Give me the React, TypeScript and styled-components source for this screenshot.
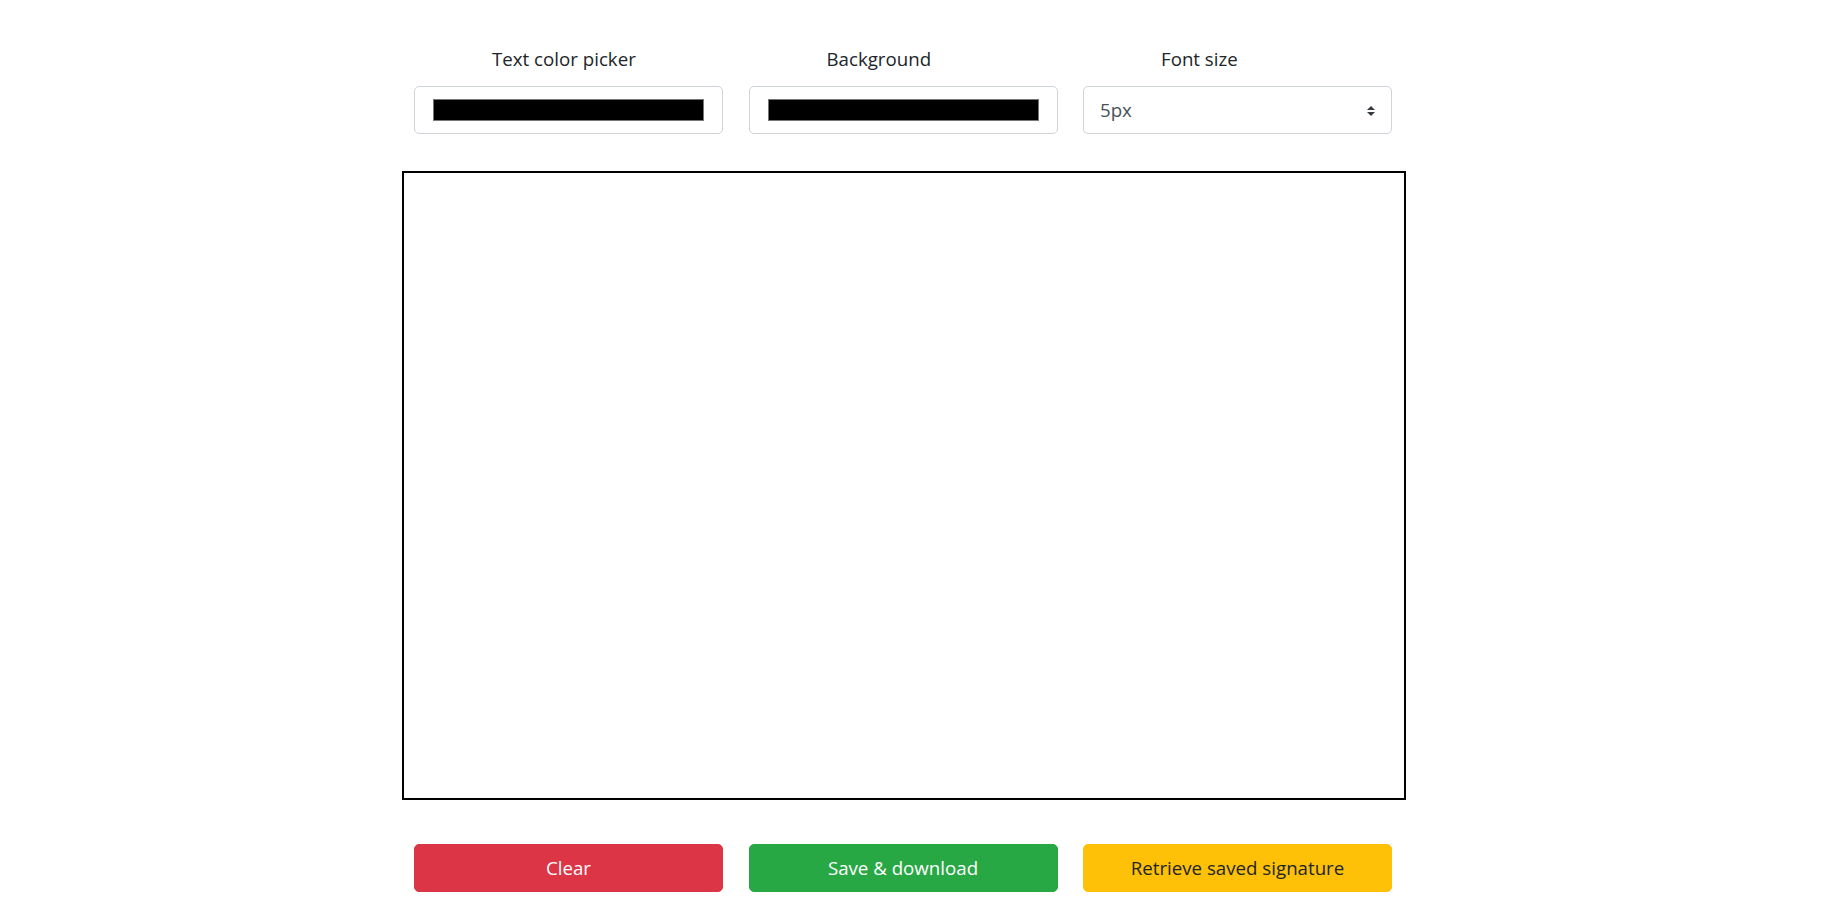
import React, { useState } from "react";
import styled, { createGlobalStyle } from "styled-components";

const FONT = `"Open Sans", "Noto Sans", "Liberation Sans", sans-serif`;
const FS = "18.7px";

const GlobalStyle = createGlobalStyle`
  html, body { margin: 0; padding: 0; background: #ffffff; }
  body { font-family: ${FONT}; color: #212529; }
  * { box-sizing: border-box; }
`;

const Page = styled.div`
  display: flex;
  justify-content: center;
  padding: 44px 40px 32px 0;
`;

const Main = styled.main`
  width: 1004px;
  display: flex;
  flex-direction: column;
`;

const Row = styled.div`
  display: grid;
  grid-template-columns: repeat(3, 309px);
  column-gap: 25.5px;
  padding-left: 12px;
`;

const Field = styled.div`
  display: flex;
  flex-direction: column;
  align-items: stretch;
`;

const Label = styled.label`
  display: block;
  text-align: left;
  padding-left: 78px;
  font-family: ${FONT};
  font-size: ${FS};
  line-height: 30px;
  height: 30px;
  margin-bottom: 12px;
  color: #212529;
`;

const ColorInput = styled.input`
  -webkit-appearance: none;
  appearance: none;
  display: block;
  width: 100%;
  height: 48px;
  padding: 8px 16px;
  margin: 0;
  border: 1px solid #ced4da;
  border-radius: 5px;
  background: #ffffff;
  cursor: pointer;

  &::-webkit-color-swatch-wrapper {
    padding: 4px 2px;
  }
  &::-webkit-color-swatch {
    border: 1px solid #777777;
    border-radius: 0;
  }
`;

const SelectWrap = styled.div`
  position: relative;
  height: 48px;
`;

const Select = styled.select`
  -webkit-appearance: none;
  appearance: none;
  display: block;
  width: 100%;
  height: 48px;
  padding: 8px 40px 8px 16px;
  margin: 0;
  border: 1px solid #ced4da;
  border-radius: 5px;
  background: #ffffff;
  font-family: ${FONT};
  font-size: ${FS};
  line-height: 30px;
  color: #495057;
  outline: none;
`;

const Arrows = styled.svg`
  position: absolute;
  right: 17px;
  top: 50%;
  width: 8px;
  height: 12px;
  margin-top: -5px;
  pointer-events: none;
`;

const Canvas = styled.canvas`
  display: block;
  width: 1004px;
  height: 629px;
  border: 2px solid #000000;
  margin-top: 37px;
  margin-bottom: 44px;
  background: #ffffff;
`;

const Button = styled.button<{ $bg: string; $fg: string }>`
  display: block;
  width: 100%;
  height: 48px;
  padding: 8px 16px;
  margin: 0;
  border: 1px solid ${(p) => p.$bg};
  border-radius: 5px;
  background: ${(p) => p.$bg};
  color: ${(p) => p.$fg};
  font-family: ${FONT};
  font-size: ${FS};
  line-height: 30px;
  text-align: center;
  cursor: pointer;
`;

export default function App() {
  const [textColor, setTextColor] = useState("#000000");
  const [bgColor, setBgColor] = useState("#000000");
  const [size, setSize] = useState("5");

  return (
    <>
      <GlobalStyle />
      <Page>
        <Main>
          <Row>
            <Field>
              <Label htmlFor="tc">Text color picker</Label>
              <ColorInput
                id="tc"
                type="color"
                value={textColor}
                onChange={(e) => setTextColor(e.target.value)}
              />
            </Field>
            <Field>
              <Label htmlFor="bg">Background</Label>
              <ColorInput
                id="bg"
                type="color"
                value={bgColor}
                onChange={(e) => setBgColor(e.target.value)}
              />
            </Field>
            <Field>
              <Label htmlFor="fs">Font size</Label>
              <SelectWrap>
                <Select id="fs" value={size} onChange={(e) => setSize(e.target.value)}>
                  {[1, 2, 3, 4, 5, 6, 7, 8, 9, 10].map((n) => (
                    <option key={n} value={String(n)}>
                      {n}px
                    </option>
                  ))}
                </Select>
                <Arrows viewBox="0 0 4 5" aria-hidden="true">
                  <path d="M2 0L0 2h4zm0 5L0 3h4z" fill="#343a40" />
                </Arrows>
              </SelectWrap>
            </Field>
          </Row>
          <Canvas width={1000} height={625} />
          <Row>
            <Button $bg="#dc3545" $fg="#ffffff">Clear</Button>
            <Button $bg="#28a745" $fg="#ffffff">Save &amp; download</Button>
            <Button $bg="#ffc107" $fg="#212529">Retrieve saved signature</Button>
          </Row>
        </Main>
      </Page>
    </>
  );
}
